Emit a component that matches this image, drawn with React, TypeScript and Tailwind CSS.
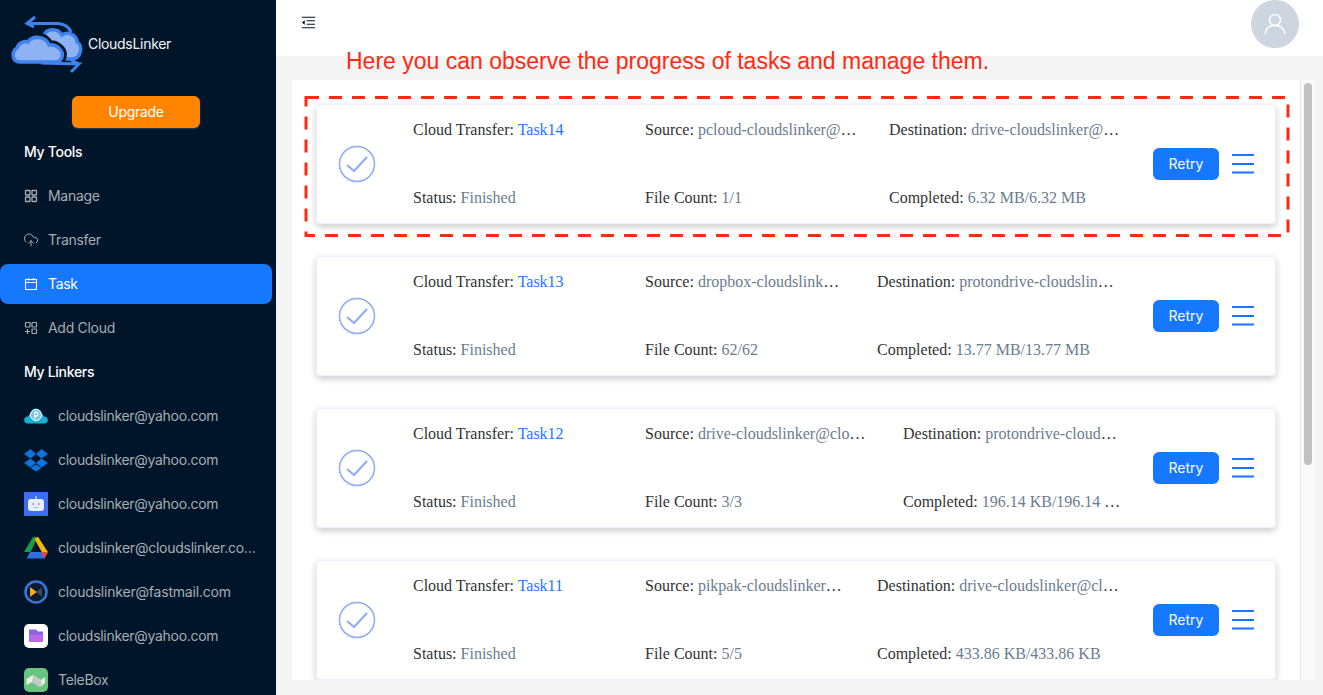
import { CloudUpload } from "lucide-react";
import { AiOutlineMenuFold } from "react-icons/ai";

const Logo = () => (
  <svg width="80" height="64" viewBox="0 0 80 64" fill="none">
    <path d="M19 11.500H50C57 12 61 15 63 20" stroke="#3f82ec" strokeWidth="3" />
    <path d="M27 5 19 11.500 26 15" stroke="#3f82ec" strokeWidth="3" />
    <path d="M36 23C39 16 50 16 54 23 60 19 69 23 69 30 75 33 74 47 63 47H44z" fill="#8fb2f2" stroke="#3f82ec" strokeWidth="3.500" />
    <path d="M12 50C4 50 3 40 9 36 11 30 17 29 20 30 24 23 38 24 41 33 48 32 56 38 54 45 53 49 50 50 47 50z" fill="#8fb2f2" stroke="#001529" strokeWidth="9" />
    <path d="M12 50C4 50 3 40 9 36 11 30 17 29 20 30 24 23 38 24 41 33 48 32 56 38 54 45 53 49 50 50 47 50z" fill="#8fb2f2" stroke="#3f82ec" strokeWidth="3.500" />
    <path d="M33 51 71 52 63 60M63 48 71 52" stroke="#3f82ec" strokeWidth="3" />
  </svg>
);

const PCloud = () => (
  <svg width="24" height="24" viewBox="0 0 24 24">
    <path d="M4 19.500C-1 19.500-1 13 3.500 12.500 5 11 6 10 6.500 9 8 3 16 3 17.500 9 18 10 19 11 20.500 12.500 25 13 25 19.500 20 19.500z" fill="#19aed2" />
    <circle cx="12" cy="11" r="5.500" fill="#6fc7e4" stroke="#fff" strokeWidth="1" />
    <path d="M10.700 14.500V8.300h1.800c2.200 0 2.200 3.700 0 3.700h-1.800" fill="none" stroke="#fff" strokeWidth="1.300" />
  </svg>
);

const Dropbox = () => (
  <svg width="24" height="24" viewBox="0 0 24 24" fill="#0b74de">
    <path d="M6.500 1 0 6l6.500 4.500L12 6zM17.500 1 12 6l5.500 4.500L24 6zM0 15l6.500 4.500L12 15l-5.500-4.500zM17.500 10.500 12 15l5.500 4.500L24 15z" />
    <path d="M12 16.500 6.500 20l5.500 3.500 5.500-3.500z" />
  </svg>
);

const Bot = () => (
  <svg width="24" height="24" viewBox="0 0 24 24">
    <rect width="24" height="24" fill="#3c6ef5" />
    <rect x="4" y="7" width="16" height="12" rx="3" fill="#e8eefe" />
    <rect x="11" y="4" width="2" height="3" fill="#9db8fa" />
    <rect x="8.500" y="11" width="1.500" height="2" fill="#7d9ef7" />
    <rect x="14" y="11" width="1.500" height="2" fill="#7d9ef7" />
    <path d="M10 15.500h4" stroke="#9db8fa" />
  </svg>
);

const Drive = () => (
  <svg width="24" height="24" viewBox="0 0 24 24">
    <path d="M9 1h5L6.500 16H0z" fill="#169c47" />
    <path d="M14 1h-.5L21 16.500h3z" fill="#f6b400" />
    <path d="M14 1 24 16.500h-6L10.500 3z" fill="#f6b400" />
    <path d="M6 16h18l-3.500 6.500H2.500z" fill="#2f6fe0" />
    <path d="M24 16l-3.500 6.500-3.500-6.500z" fill="#e8472f" />
  </svg>
);

const Fastmail = () => (
  <svg width="24" height="24" viewBox="0 0 24 24">
    <circle cx="12" cy="12" r="10.500" fill="#0b1a30" stroke="#3a78d8" strokeWidth="2.500" />
    <path d="M6 7v10l7-5z" fill="#f5a623" />
    <path d="M18 7v10l-6-5z" fill="#39465a" />
  </svg>
);

const FolderApp = () => (
  <svg width="24" height="24" viewBox="0 0 24 24">
    <rect width="24" height="24" rx="5" fill="#fff" />
    <path d="M5 5.500h7l2 2h5V18H5z" fill="#8a63e8" />
    <path d="M5 11h14v7H5z" fill="#bb6ae6" />
  </svg>
);

const TeleBox = () => (
  <svg width="24" height="24" viewBox="0 0 24 24">
    <rect width="24" height="24" rx="5" fill="#68c47f" />
    <path d="M2.500 11 9 7l8 5 4-3v6l-5 4-8-5-5.500 3z" fill="#eceeec" />
    <path d="M9 7l8 5v7l-1 0-8-5z" fill="#c3c9c5" />
  </svg>
);

const ManageIcon = () => (
  <svg width="14" height="14" viewBox="0 0 14 14" fill="none" stroke="currentColor" strokeWidth="1.300">
    <rect x="1.500" y="1.500" width="4.500" height="4.500" rx=".5" />
    <rect x="8" y="1.500" width="4.500" height="4.500" rx=".5" />
    <rect x="1.500" y="8" width="4.500" height="4.500" rx=".5" />
    <rect x="8" y="8" width="4.500" height="4.500" rx=".5" />
  </svg>
);

const TaskIcon = () => (
  <svg width="14" height="14" viewBox="0 0 14 14" fill="none" stroke="currentColor" strokeWidth="1.100">
    <rect x="1.500" y="2.500" width="11" height="10" />
    <path d="M1.500 5.500h11M4.500 1v2.500M9.500 1v2.500" />
  </svg>
);

const AddCloudIcon = () => (
  <svg width="14" height="14" viewBox="0 0 14 14" fill="none" stroke="currentColor" strokeWidth="1.200">
    <rect x="1.500" y="1.500" width="4.500" height="4.500" rx=".5" />
    <rect x="8" y="1.500" width="4.500" height="4.500" rx=".5" />
    <rect x="8" y="8" width="4.500" height="4.500" rx=".5" />
    <path d="M1 10.500h5M3.500 8v5" />
  </svg>
);

const tools = [
  { name: "Manage", icon: <ManageIcon /> },
  { name: "Transfer", icon: <CloudUpload size={16} strokeWidth={1.500} className="-mx-px" /> },
  { name: "Task", icon: <TaskIcon />, active: true },
  { name: "Add Cloud", icon: <AddCloudIcon /> },
];

const linkers = [
  { name: "cloudslinker@yahoo.com", icon: <PCloud />, text: "truncate" },
  { name: "cloudslinker@yahoo.com", icon: <Dropbox />, text: "truncate" },
  { name: "cloudslinker@yahoo.com", icon: <Bot />, text: "truncate" },
  { name: "cloudslinker@cloudslinker.co…", icon: <Drive />, text: "truncate tracking-[-0.25px]" },
  { name: "cloudslinker@fastmail.com", icon: <Fastmail />, text: "truncate tracking-[-0.2px]" },
  { name: "cloudslinker@yahoo.com", icon: <FolderApp />, text: "truncate" },
  { name: "TeleBox", icon: <TeleBox />, text: "truncate" },
];

const tasks = [
  { name: "Task14", source: "pcloud-cloudslinker@yahoo.com", dest: "drive-cloudslinker@cloudslinker.com", count: "1/1", done: "6.32 MB/6.32 MB", col: "w-[244px]", pad: "pr-[28px]" },
  { name: "Task13", source: "dropbox-cloudslinker@yahoo.com", dest: "protondrive-cloudslinker@proton.me", count: "62/62", done: "13.77 MB/13.77 MB", col: "w-[232px]", pad: "pr-[34px]" },
  { name: "Task12", source: "drive-cloudslinker@cloudslinker.com", dest: "protondrive-cloudslinker@proton.me", count: "3/3", done: "196.14 KB/196.14 KB", col: "w-[258px]", pad: "pr-[36px]" },
  { name: "Task11", source: "pikpak-cloudslinker@yahoo.com", dest: "drive-cloudslinker@cloudslinker.com", count: "5/5", done: "433.86 KB/433.86 KB", col: "w-[232px]", pad: "pr-[34px]" },
];

const Check = () => (
  <svg width="38" height="38" viewBox="0 0 38 38" fill="none" stroke="#8fabf5">
    <circle cx="19" cy="19" r="17.500" strokeWidth="1.500" />
    <path d="M9 20l7 6L29 12" strokeWidth="2" />
  </svg>
);

const Burger = () => (
  <svg width="22" height="20" viewBox="0 0 22 20" stroke="#1677ff" strokeWidth="2">
    <path d="M0 1h22M0 10h22M0 18.500h22" />
  </svg>
);

const Field = ({ label, value, tone = "text-[#6b7c8f]", pad = "pr-[22px]" }: { label: string; value: string; tone?: string; pad?: string }) => (
  <div className={`truncate text-[#333] ${pad}`}>
    {label} <span className={tone}>{value}</span>
  </div>
);

export default function App() {
  return (
    <div className="flex h-[695px] w-[1323px] overflow-hidden bg-[#f5f5f5] font-['Inter',sans-serif]">
      <aside className="flex w-[276px] shrink-0 flex-col overflow-hidden bg-[#001529] text-sm tracking-[-0.3px]">
        <div className="flex h-[88px] shrink-0 items-center pl-2">
          <Logo />
          <span className="text-[#f2f5f8]">CloudsLinker</span>
        </div>
        <button className="ml-[72px] mt-2 h-8 w-32 shrink-0 rounded-md bg-[#ff8400] text-white shadow-[0_1px_2px_rgba(255,255,255,0.2)]">Upgrade</button>
        <div className="mt-1 flex h-10 shrink-0 items-center pl-6 font-medium text-white">My Tools</div>
        {tools.map((t) => (
          <div
            key={t.name}
            className={
              t.active
                ? "mt-1 mr-1 flex h-10 shrink-0 items-center gap-[10px] rounded-lg bg-[#1677ff] pl-6 text-white"
                : "mt-1 mr-1 flex h-10 shrink-0 items-center gap-[10px] rounded-lg pl-6 text-[#a6adb4]"
            }
          >
            {t.icon}
            {t.name}
          </div>
        ))}
        <div className="mt-1 flex h-10 shrink-0 items-center pl-6 font-medium text-white">My Linkers</div>
        {linkers.map((l, i) => (
          <div key={i} className="mt-1 flex h-10 shrink-0 items-center gap-[10px] pl-6 pr-4 text-[#a6adb4]">
            <span className="shrink-0">{l.icon}</span>
            <span className={l.text}>{l.name}</span>
          </div>
        ))}
      </aside>

      <main className="relative flex min-w-0 flex-1 flex-col">
        <header className="flex h-14 shrink-0 items-start justify-between bg-white pl-6 pr-6">
          <AiOutlineMenuFold size={17} className="mt-[14px] text-[#001529]" />
          <div className="flex h-12 w-12 items-center justify-center rounded-full bg-[#cdd5e0]">
            <svg width="24" height="24" viewBox="0 0 24 24" fill="none" stroke="#fff" strokeWidth="1.500">
              <circle cx="12" cy="8" r="5.500" />
              <path d="M2 22c1-6 5-8.500 10-8.500S21 16 22 22" />
            </svg>
          </div>
        </header>

        <div className="absolute left-[70px] top-[47px] font-['Liberation_Sans',sans-serif] text-[23px] leading-7 text-[#ff2a12]">
          Here you can observe the progress of tasks and manage them.
        </div>

        <div className="mt-6 ml-4 mr-[9px] flex h-[600px]">
          <div className="flex-1 overflow-hidden bg-white px-6 pt-6">
            <div className="flex flex-col gap-8 font-['Liberation_Serif',serif] text-base leading-6">
              {tasks.map((t) => (
                <div key={t.name} className="relative flex h-[120px] shrink-0 items-center rounded border border-[#e9effc] bg-white pr-[21px] shadow-[0_3px_7px_rgba(0,0,0,0.2)]">
                  <div className="ml-[21px] mr-[37px] shrink-0"><Check /></div>
                  <div className="flex h-full min-w-0 flex-1 flex-col justify-between py-[13px]">
                    <div className="flex">
                      <div className="w-[232px] shrink-0"><Field label="Cloud Transfer:" value={t.name} tone="text-[#1677ff]" /></div>
                      <div className={`${t.col} shrink-0`}><Field label="Source:" value={t.source} pad={t.pad} /></div>
                      <div className="min-w-0 flex-1"><Field label="Destination:" value={t.dest} /></div>
                    </div>
                    <div className="flex">
                      <div className="w-[232px] shrink-0"><Field label="Status:" value="Finished" /></div>
                      <div className={`${t.col} shrink-0`}><Field label="File Count:" value={t.count} /></div>
                      <div className="min-w-0 flex-1"><Field label="Completed:" value={t.done} /></div>
                    </div>
                  </div>
                  <button className="ml-[10px] h-8 w-[66px] shrink-0 rounded-md bg-[#1677ff] font-['Inter',sans-serif] text-sm text-white">Retry</button>
                  <div className="ml-[13px] shrink-0"><Burger /></div>
                  {t.name === "Task14" && (
                    <svg className="pointer-events-none absolute -left-3 -top-[9px] overflow-visible" width="984" height="140" fill="none">
                      <path d="M1 1.500H983V139.500H1Z" stroke="#ff2a12" strokeWidth="3" strokeDasharray="13 10" />
                    </svg>
                  )}
                </div>
              ))}
            </div>
          </div>
          <div className="w-[14px] shrink-0 border-l border-[#e8e8e8] bg-[#fafafa] pl-[3px] pt-[3px]">
            <div className="h-[382px] w-2 rounded bg-[#c1c1c1]" />
          </div>
        </div>
      </main>
    </div>
  );
}
